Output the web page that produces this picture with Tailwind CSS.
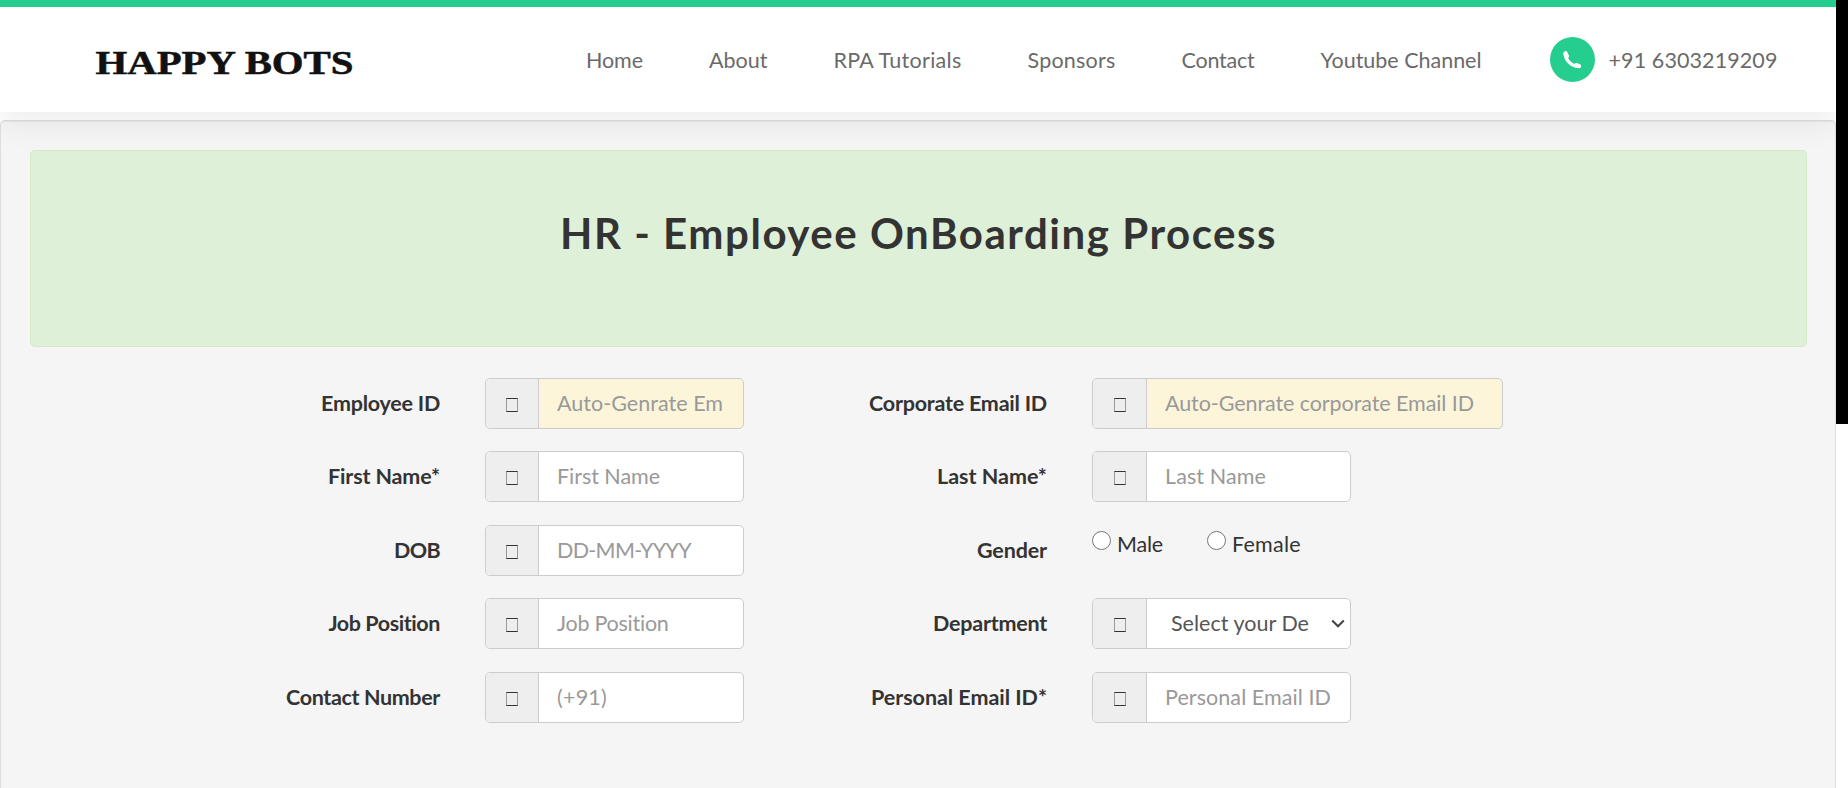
<!DOCTYPE html>
<html lang="en">
<head>
<meta charset="utf-8">
<title>HR - Employee OnBoarding Process</title>
<script src="https://cdn.jsdelivr.net/npm/@tailwindcss/browser@4"></script>
</head>
<body class="w-[1848px] h-[788px] overflow-hidden bg-white text-[#333] text-[21.5px] font-['Lato','Open_Sans',sans-serif]">
<div class="flex items-start">
<div class="w-[1836px] h-[788px] shrink-0 flex flex-col">
  <header class="relative z-10 h-[112px] shrink-0 border-t-[7px] border-[#25cd8e] bg-white shadow-[0_10px_30px_rgba(0,0,0,0.08)] flex items-start text-[#6a6a6a]">
    <svg class="ml-[95px] mt-[36px] w-[260px] h-[38px] shrink-0" viewBox="0 0 260 38"><text x="0.5" y="30.5" textLength="258" lengthAdjust="spacingAndGlyphs" font-family="Liberation Serif, serif" font-weight="700" font-size="33" fill="#111" stroke="#111" stroke-width="0.5">HAPPY BOTS</text></svg>
    <nav class="ml-[231px] h-[106px] flex items-center gap-[66px] whitespace-nowrap">
      <a data-w="57">Home</a>
      <a data-w="58.5">About</a>
      <a data-w="128">RPA Tutorials</a>
      <a data-w="88">Sponsors</a>
      <a data-w="73">Contact</a>
      <a data-w="161">Youtube Channel</a>
    </nav>
    <div class="ml-[68px] h-[105px] flex items-center whitespace-nowrap">
      <span class="size-[45px] rounded-full bg-[#25cd8e] flex items-center justify-center">
        <svg class="w-[20px] h-[20px]" viewBox="0 0 19 19" fill="none" stroke="#fff" stroke-linecap="round"><path d="M3 4.2C3.6 9.8 8.8 15 14.6 15.6" stroke-width="3.2"/><path d="M3.3 3.2L4.6 5.9M13.4 14.4L16.1 15.2" stroke-width="4.2"/></svg>
      </span>
      <span class="ml-[14px] pt-[1px]" data-w="169">+91 6303219209</span>
    </div>
  </header>
  <main class="mt-2 grow border border-b-0 border-[#dedede] rounded-t-[5px] bg-[#f5f5f5] shadow-[inset_0_1px_1px_rgba(0,0,0,0.05)] pl-[29px] pr-[28px] pt-[29px]">
    <section class="h-[197px] border border-[#d6e9c6] rounded-[5px] bg-[#dff0d8] flex justify-center pt-[56px]">
      <h1 class="text-[42px] leading-[52px] font-bold whitespace-nowrap" data-w="717">HR - Employee OnBoarding Process</h1>
    </section>
    <form class="mt-[30.5px] grid grid-cols-[410px_45px_259px_303px_45px_412px] gap-y-[22.5px] whitespace-nowrap">
      <label class="flex items-center justify-end font-bold"><span data-w="119">Employee ID</span></label><i></i>
      <div class="h-[51px] flex rounded-[5px] border border-[#ccc] bg-[#fcf5d9] overflow-hidden"><b class="shrink-0 w-[53px] border-r border-[#ccc] bg-[#eee] flex items-center justify-center pt-[3px]"><u class="w-[12px] h-[14px] border border-x-[#999] border-y-[#333]"></u></b><span class="pl-[18px] flex items-center text-[#999]"><span data-w="166">Auto-Genrate Em</span></span></div>
      <label class="flex items-center justify-end font-bold"><span data-w="178">Corporate Email ID</span></label><i></i>
      <div class="w-[411px] h-[51px] flex rounded-[5px] border border-[#ccc] bg-[#fcf5d9] overflow-hidden"><b class="shrink-0 w-[54px] border-r border-[#ccc] bg-[#eee] flex items-center justify-center pt-[3px]"><u class="w-[12px] h-[14px] border border-x-[#999] border-y-[#333]"></u></b><span class="pl-[18px] flex items-center text-[#999]"><span data-w="309">Auto-Genrate corporate Email ID</span></span></div>

      <label class="flex items-center justify-end font-bold"><span data-w="112">First Name*</span></label><i></i>
      <div class="h-[51px] flex rounded-[5px] border border-[#ccc] bg-white overflow-hidden"><b class="shrink-0 w-[53px] border-r border-[#ccc] bg-[#eee] flex items-center justify-center pt-[3px]"><u class="w-[12px] h-[14px] border border-x-[#999] border-y-[#333]"></u></b><span class="pl-[18px] flex items-center text-[#999]"><span data-w="103">First Name</span></span></div>
      <label class="flex items-center justify-end font-bold"><span data-w="110">Last Name*</span></label><i></i>
      <div class="w-[259px] h-[51px] flex rounded-[5px] border border-[#ccc] bg-white overflow-hidden"><b class="shrink-0 w-[54px] border-r border-[#ccc] bg-[#eee] flex items-center justify-center pt-[3px]"><u class="w-[12px] h-[14px] border border-x-[#999] border-y-[#333]"></u></b><span class="pl-[18px] flex items-center text-[#999]"><span data-w="101">Last Name</span></span></div>

      <label class="flex items-center justify-end font-bold"><span data-w="46">DOB</span></label><i></i>
      <div class="h-[51px] flex rounded-[5px] border border-[#ccc] bg-white overflow-hidden"><b class="shrink-0 w-[53px] border-r border-[#ccc] bg-[#eee] flex items-center justify-center pt-[3px]"><u class="w-[12px] h-[14px] border border-x-[#999] border-y-[#333]"></u></b><span class="pl-[18px] flex items-center text-[#999]"><span data-w="134">DD-MM-YYYY</span></span></div>
      <label class="flex items-center justify-end font-bold"><span data-w="70">Gender</span></label><i></i>
      <div class="h-[51px] flex items-start pt-[6px]">
        <u class="shrink-0 size-[19px] rounded-full border-[1.5px] border-[#767676] bg-white"></u><span class="ml-[6px] leading-[26px]" data-w="46">Male</span>
        <u class="shrink-0 ml-[44px] size-[19px] rounded-full border-[1.5px] border-[#767676] bg-white"></u><span class="ml-[6px] leading-[26px]" data-w="69">Female</span>
      </div>

      <label class="flex items-center justify-end font-bold"><span data-w="112">Job Position</span></label><i></i>
      <div class="h-[51px] flex rounded-[5px] border border-[#ccc] bg-white overflow-hidden"><b class="shrink-0 w-[53px] border-r border-[#ccc] bg-[#eee] flex items-center justify-center pt-[3px]"><u class="w-[12px] h-[14px] border border-x-[#999] border-y-[#333]"></u></b><span class="pl-[18px] flex items-center text-[#999]"><span data-w="112">Job Position</span></span></div>
      <label class="flex items-center justify-end font-bold"><span data-w="114">Department</span></label><i></i>
      <div class="w-[259px] h-[51px] flex rounded-[5px] border border-[#ccc] bg-white overflow-hidden"><b class="shrink-0 w-[54px] border-r border-[#ccc] bg-[#eee] flex items-center justify-center pt-[3px]"><u class="w-[12px] h-[14px] border border-x-[#999] border-y-[#333]"></u></b><span class="pl-[24px] flex items-center pb-[1px] text-[#555]"><span data-w="138">Select your De</span></span><svg class="shrink-0 ml-auto mr-[5px] mt-[20px] w-[14px] h-[10px]" viewBox="0 0 14 10" fill="none" stroke="#444" stroke-width="2"><path d="M1.2 1.5L7 7.3L12.8 1.5"/></svg></div>

      <label class="flex items-center justify-end font-bold"><span data-w="154">Contact Number</span></label><i></i>
      <div class="h-[51px] flex rounded-[5px] border border-[#ccc] bg-white overflow-hidden"><b class="shrink-0 w-[53px] border-r border-[#ccc] bg-[#eee] flex items-center justify-center pt-[3px]"><u class="w-[12px] h-[14px] border border-x-[#999] border-y-[#333]"></u></b><span class="pl-[18px] flex items-center text-[#999]"><span data-w="50">(+91)</span></span></div>
      <label class="flex items-center justify-end font-bold"><span data-w="176">Personal Email ID*</span></label><i></i>
      <div class="w-[259px] h-[51px] flex rounded-[5px] border border-[#ccc] bg-white overflow-hidden"><b class="shrink-0 w-[54px] border-r border-[#ccc] bg-[#eee] flex items-center justify-center pt-[3px]"><u class="w-[12px] h-[14px] border border-x-[#999] border-y-[#333]"></u></b><span class="pl-[18px] flex items-center text-[#999]"><span data-w="166">Personal Email ID</span></span></div>
    </form>
  </main>
</div>
<div class="relative z-20 w-3 h-[424px] bg-black shrink-0"></div>
</div>
<script>
// Track each label so that it fills its width in px, once styles are in.
function track() {
  document.querySelectorAll('[data-w]').forEach(function (el) {
    el.style.letterSpacing = '0px';
    var range = document.createRange();
    range.selectNodeContents(el);
    var natural = range.getBoundingClientRect().width;
    el.style.letterSpacing = ((+el.dataset.w - natural) / el.textContent.length) + 'px';
  });
}
window.addEventListener('load', function () {
  track();
  requestAnimationFrame(track);
  document.fonts.ready.then(track);
  setTimeout(track, 60);
});
</script>
</body>
</html>
